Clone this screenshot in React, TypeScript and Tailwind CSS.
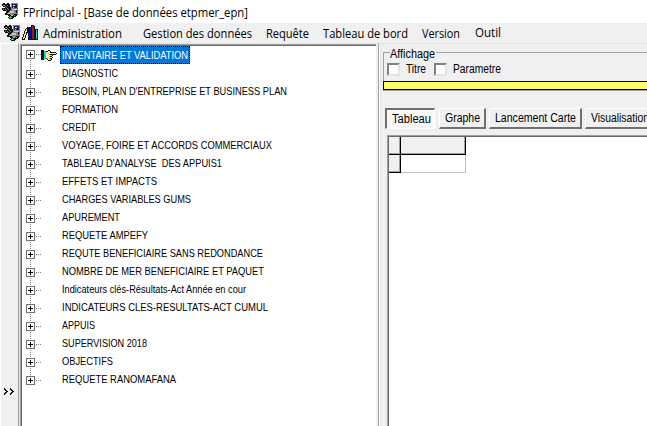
import React, { useLayoutEffect, useRef, useState } from "react";

const rows: [string, number][] = [
  ["INVENTAIRE ET VALIDATION", 126],
  ["DIAGNOSTIC", 56],
  ["BESOIN, PLAN D'ENTREPRISE ET BUSINESS PLAN", 225],
  ["FORMATION", 56],
  ["CREDIT", 34],
  ["VOYAGE, FOIRE ET ACCORDS COMMERCIAUX", 210],
  ["TABLEAU D'ANALYSE  DES APPUIS1", 160],
  ["EFFETS ET IMPACTS", 95],
  ["CHARGES VARIABLES GUMS", 129],
  ["APUREMENT", 58],
  ["REQUETE AMPEFY", 86],
  ["REQUTE BENEFICIAIRE SANS REDONDANCE", 201],
  ["NOMBRE DE MER BENEFICIAIRE ET PAQUET", 202],
  ["Indicateurs clés-Résultats-Act Année en cour", 184],
  ["INDICATEURS CLES-RESULTATS-ACT CUMUL", 206],
  ["APPUIS", 33],
  ["SUPERVISION 2018", 85],
  ["OBJECTIFS", 51],
  ["REQUETE RANOMAFANA", 114],
];

/* A label condensed or widened to a given width. */
function Fit({ text, width }: { text: string; width: number }) {
  const ref = useRef<HTMLSpanElement>(null);
  const [scale, setScale] = useState(1);
  useLayoutEffect(() => {
    const el = ref.current;
    if (!el) return;
    const before = el.style.transform;
    el.style.transform = "none";
    const natural = el.getBoundingClientRect().width;
    el.style.transform = before;
    setScale(width / natural);
  }, [width]);
  return (
    <span className="block shrink-0 whitespace-pre" style={{ width }}>
      <span ref={ref} className="inline-block origin-left" style={{ transform: `scaleX(${scale})` }}>
        {text}
      </span>
    </span>
  );
}

const palette: Record<string, string> = {
  k: "#101010",
  g: "#808080",
  l: "#c8c8c8",
  w: "#ffffff",
  n: "#102060",
  b: "#0000d0",
  r: "#a01820",
  c: "#10d0e0",
  y: "#fff080",
  o: "#c0a030",
  G: "#20c030",
};

function Pixels({ art }: { art: string[] }) {
  const w = art[0].length;
  return (
    <svg width={w} height={art.length} viewBox={`0 0 ${w} ${art.length}`} shapeRendering="crispEdges" className="shrink-0">
      {art.flatMap((line, y) =>
        [...line].map((c, x) => (palette[c] ? <rect key={`${x}-${y}`} x={x} y={y} width="1" height="1" fill={palette[c]} /> : null)),
      )}
    </svg>
  );
}

const appArt = [
  ".kk..kk..ggggggg",
  "kkkkkkkk.gnnnnng",
  "kglkkgkk.gnyynng",
  ".kkgkkkk.gnnnnng",
  "...kgkkkkgnlnnng",
  "kkkkkgkkkggggggg",
  "kgkgkkgkkglllllg",
  ".kkkgkkkggggggkg",
  "....kkkgllllGgkg",
  "....kkggllllggkg",
  "...kkgllggggggGg",
  "...kkkkkggggkkkg",
  "......kkkllkgkk.",
  ".......kGkkkkk..",
  "......kglGkk....",
  ".......kkkk.....",
];

const bookArt = [
  ".........kkk....",
  ".........krrk...",
  ".....kkkkkrrk...",
  "....kkkbbkrrk...",
  "...kykkbbkrrkkkk",
  "...kykkbbkrrkkck",
  "..kyykkbbkrrkkck",
  "..kykkkbbkrrkkck",
  "..kyk.kbbkrrkkck",
  ".kyyk.kbbkrrkkck",
  ".kyk..kbbkrrkkck",
  ".kyk..kbbkrrkkck",
  "kyyk..kbbkrrkkck",
  "kyk...kbbkrrkkck",
  "kkk...kkkkkkkkkk",
];

const handArt = [
  "kkk....kk.......",
  "kkkcckkyyk......",
  "kkkccyyyykkkkkk.",
  "kkkccyyoyyyyyyyk",
  "kkkccyyyokkkkkk.",
  "kkkccyyyyyyk....",
  "kkkccyyyokk.....",
  "kkkccyyyyyyk....",
  "kkkcckyyokk.....",
  "kkk...kyyyk.....",
  ".......kkk......",
];

const chevronArt = [
  "k.....k....",
  "kk....kk...",
  ".kk....kk..",
  "..kk....kk.",
  ".kk....kk..",
  "kk....kk...",
  "k.....k....",
];

function Plus({ first, last }: { first: boolean; last: boolean }) {
  const y = first ? 8.5 : 10.5;
  return (
    <svg width="15" height="18" viewBox="0 0 15 18" shapeRendering="crispEdges" className="shrink-0">
      {!first && <path d="M4.500 0v6" stroke="#808080" strokeDasharray="1 1" />}
      {!last && <path d={`M4.5 ${y + 5.5}V18`} stroke="#808080" strokeDasharray="1 1" />}
      <rect x="0.500" y={y - 4} width="8" height="8" fill="#fff" stroke="#707070" />
      <path d={`M2 ${y}h5M4.5 ${y - 2.5}v5`} stroke="#000" />
      <path d={`M10 ${y}h5`} stroke="#808080" strokeDasharray="1 1" />
    </svg>
  );
}

function Check({ label, width }: { label: string; width: number }) {
  return (
    <label className="flex items-center">
      <span className="mr-[6px] h-[13px] w-[13px] border-2 border-t-[#808080] border-l-[#808080] border-r-[#e3e3e3] border-b-[#e3e3e3] bg-white" />
      <Fit text={label} width={width} />
    </label>
  );
}

function Tab({ label, width, className }: { label: string; width: number; className: string }) {
  return (
    <button
      className={`flex h-[21px] shrink-0 items-center border-t border-l border-r-2 border-b-2 border-t-white border-l-white border-r-[#707070] border-b-[#707070] pl-[5px] text-left ${className}`}
    >
      <Fit text={label} width={width} />
    </button>
  );
}

export default function App() {
  return (
    <div className="flex h-[426px] w-[647px] flex-col overflow-hidden bg-white font-['Liberation_Sans',sans-serif] text-black">
      <header className="flex h-[23px] shrink-0 items-start pt-[3px] pl-[2px]">
        <Pixels art={appArt} />
        <h1 className="ml-[5px] font-['Open_Sans',sans-serif] text-[12px] leading-[20px]">
          <Fit text="FPrincipal - [Base de données etpmer_epn]" width={225} />
        </h1>
      </header>
      <nav className="flex h-[20px] shrink-0 items-start bg-[#f0f0f0] pl-[4px] font-['Open_Sans',sans-serif] text-[12px] leading-[20px]">
        <div className="flex gap-[2px] pt-[2px]">
          <Pixels art={appArt} />
          <Pixels art={bookArt} />
        </div>
        <div className="ml-[5px] flex pt-px">
          <Fit text="Administration" width={79} />
          <div className="ml-[21px]"><Fit text="Gestion des données" width={109} /></div>
          <div className="ml-[14px]"><Fit text="Requête" width={43} /></div>
          <div className="ml-[14px]"><Fit text="Tableau de bord" width={85} /></div>
          <div className="ml-[14px]"><Fit text="Version" width={38} /></div>
          <div className="-mt-px ml-[15px]"><Fit text="Outil" width={26} /></div>
        </div>
      </nav>
      <main className="flex h-[383px] shrink-0">
        <aside className="flex w-[18px] shrink-0 items-end border-t border-l border-white bg-[#f0f0f0] pb-[31px] pl-[3px]">
          <Pixels art={chevronArt} />
        </aside>
        <section className="flex w-[360px] shrink-0 border-t border-r-2 border-l border-t-[#e3e3e3] border-r-[#f0f0f0] border-l-[#a0a0a0]">
          <div className="flex grow border-l border-[#e3e3e3]">
            <div className="flex grow flex-col border-t border-l border-[#a0a0a0]">
              <div className="flex grow flex-col border-t border-l border-[#696969] pl-[4px]">
                {rows.map(([text, width], i) => (
                  <div key={text} className="flex h-[18px] items-start">
                    <Plus first={i === 0} last={i === rows.length - 1} />
                    <div className="flex w-[19px] shrink-0 pt-[4px]">{i === 0 && <Pixels art={handArt} />}</div>
                    <span
                      className={`flex h-[18px] items-start border pr-px pl-px text-[11px] leading-[17px] ${i === 0 ? "border-dotted border-black bg-[#0078d7] text-white" : "border-transparent"}`}
                    >
                      <Fit text={text} width={width} />
                    </span>
                  </div>
                ))}
              </div>
            </div>
          </div>
        </section>
        <div className="w-[2px] shrink-0 border-r border-l border-r-white border-l-[#a0a0a0]" />
        <section className="flex w-[267px] shrink-0 flex-col overflow-hidden border-t border-l border-[#e3e3e3] bg-[#f0f0f0] text-[12px] leading-[14px]">
          <div className="mt-[8px] ml-[2px] flex h-[29px] w-[290px] shrink-0 flex-col border-t border-l border-[#a0a0a0]">
            <div className="-mt-[6px] ml-[6px] w-[46px] shrink-0 bg-[#f0f0f0]">
              <Fit text="Affichage" width={45} />
            </div>
            <div className="mt-px ml-[3px] flex gap-[8px]">
              <Check label="Titre" width={20} />
              <Check label="Parametre" width={48} />
            </div>
          </div>
          <div className="ml-[2px] h-[9px] w-[290px] shrink-0 border border-black bg-[#ffff66]" />
          <div className="ml-[2px] h-px shrink-0 bg-[#a0a0a0]" />
          <div className="mt-[17px] ml-[4px] flex shrink-0 gap-[3px]">
            <div className="mr-px flex h-[21px] w-[50px] shrink-0 items-center border-t-2 border-r border-b border-l-2 border-t-[#707070] border-r-white border-b-white border-l-[#707070] bg-[#f8f8f8] pl-[5px]">
              <Fit text="Tableau" width={39} />
            </div>
            <Tab label="Graphe" width={35} className="w-[47px]" />
            <Tab label="Lancement Carte" width={81} className="w-[93px]" />
            <Tab label="Visualisation" width={58} className="w-[80px]" />
          </div>
          <div className="mt-[6px] ml-[6px] flex w-[290px] grow border-t border-l border-[#a0a0a0]">
            <div className="flex grow items-start border-t border-l border-[#696969] bg-white">
              <div className="grid grid-cols-[12px_65px] grid-rows-[18px_18px]">
                <div className="border-r border-b border-black">
                  <div className="h-full border-r border-b border-[#a0a0a0] bg-[#f0f0f0]" />
                </div>
                <div className="border-r border-b border-black">
                  <div className="h-full border-r border-b border-[#a0a0a0] bg-[#f0f0f0]" />
                </div>
                <div className="border-r border-b border-black">
                  <div className="h-full border-r border-b border-[#a0a0a0] bg-[#f0f0f0]" />
                </div>
                <div className="border-r border-b border-[#c0c0c0] bg-white" />
              </div>
            </div>
          </div>
        </section>
      </main>
    </div>
  );
}
